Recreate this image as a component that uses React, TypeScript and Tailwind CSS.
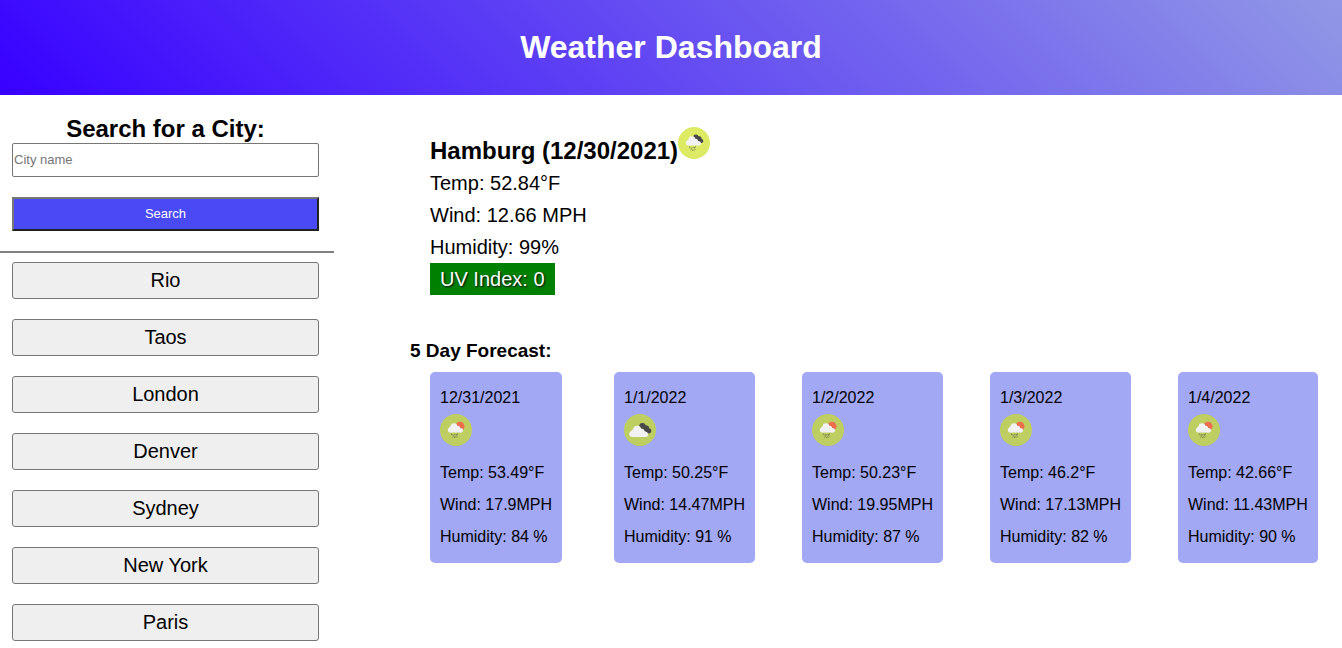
import React from "react";

type Sky = "rain" | "sun-rain" | "clouds";

interface Day {
  date: string;
  sky: Sky;
  temp: string;
  wind: string;
  humidity: string;
}

const cities = ["Rio", "Taos", "London", "Denver", "Sydney", "New York", "Paris"];

const days: Day[] = [
  { date: "12/31/2021", sky: "sun-rain", temp: "53.49°F", wind: "17.9MPH", humidity: "84 %" },
  { date: "1/1/2022", sky: "clouds", temp: "50.25°F", wind: "14.47MPH", humidity: "91 %" },
  { date: "1/2/2022", sky: "sun-rain", temp: "50.23°F", wind: "19.95MPH", humidity: "87 %" },
  { date: "1/3/2022", sky: "sun-rain", temp: "46.2°F", wind: "17.13MPH", humidity: "82 %" },
  { date: "1/4/2022", sky: "sun-rain", temp: "42.66°F", wind: "11.43MPH", humidity: "90 %" },
];

function RainCloud() {
  return (
    <>
      <g fill="#f2f2f2">
        <circle cx="10.3" cy="16" r="2.500" />
        <circle cx="11" cy="14" r="1.800" />
        <circle cx="14" cy="12.600" r="3.300" />
        <circle cx="17.600" cy="14.200" r="2.500" />
        <circle cx="21" cy="16.400" r="2.100" />
        <rect x="10.3" y="14" width="10.700" height="4.500" />
      </g>
      <path
        d="M11.700 20l.3.900M14.100 20.600l-.2.800M17.300 19.900l-.5 1.200M13 22.800l-.1.200M15 22.800l-.2.800M15.900 20.400l.1.200M17 22.800l-.1.200"
        stroke="#4b4b4b"
        strokeWidth="1"
        strokeLinecap="round"
        opacity="0.75"
      />
    </>
  );
}

function SkyIcon({ sky, className }: { sky: Sky; className: string }) {
  return (
    <svg viewBox="0 0 32 32" className={className} aria-hidden="true">
      <circle cx="16" cy="16" r="16" fill={sky === "rain" ? "#dcea64" : "#bfce60"} />
      {sky === "clouds" && (
        <>
          <g fill="#484848">
            <circle cx="18.200" cy="11.800" r="2.900" />
            <circle cx="22.400" cy="14.200" r="2.800" />
            <circle cx="25" cy="16.900" r="2.400" />
            <path d="M18 14l1.500-5 5.500 5 1 5.200h-3z" />
          </g>
          <g fill="#f2f2f2">
            <circle cx="8.200" cy="20" r="3" />
            <circle cx="9.500" cy="17.500" r="2.200" />
            <circle cx="13.200" cy="15.700" r="4" />
            <circle cx="17.600" cy="17.600" r="2.800" />
            <circle cx="21.400" cy="20.400" r="2.600" />
            <rect x="8.200" y="17.500" width="13.200" height="5.500" />
          </g>
        </>
      )}
      {sky === "sun-rain" && <circle cx="20" cy="12.200" r="4.500" fill="#ec6e4c" />}
      {sky === "rain" && (
        <g fill="#484848">
          <circle cx="17.700" cy="10" r="2.400" />
          <circle cx="21.200" cy="11.600" r="2.400" />
          <circle cx="23.300" cy="14" r="2" />
          <path d="M17 12l1.500-4.400 4.500 3.400 1 5-3-.5z" />
        </g>
      )}
      {sky !== "clouds" && <RainCloud />}
    </svg>
  );
}

function ForecastCard({ day }: { day: Day }) {
  return (
    <article className="justify-self-start rounded-[5px] bg-[#a2a8f4] p-2.5 text-base leading-8 whitespace-nowrap">
      <p>{day.date}</p>
      <SkyIcon sky={day.sky} className="mb-[11px] block size-8" />
      <p>Temp: {day.temp}</p>
      <p>Wind: {day.wind}</p>
      <p>Humidity: {day.humidity}</p>
    </article>
  );
}

export default function App() {
  return (
    <div className="bg-white font-['Liberation_Sans',Arial,sans-serif] text-black">
      <header className="bg-[linear-gradient(45deg,#3700ff,#9198e5)] pt-[29px] pb-[30px] text-center text-white">
        <h1 className="text-[32px] leading-9 font-bold">Weather Dashboard</h1>
      </header>

      <div className="flex">
        <aside className="w-[334px] shrink-0 pt-5">
          <form className="flex flex-col pr-[15px] pl-3" onSubmit={(e) => e.preventDefault()}>
            <label htmlFor="city" className="text-center text-2xl leading-7 font-bold">
              Search for a City:
            </label>
            <input
              id="city"
              type="text"
              placeholder="City name"
              className="h-[34px] rounded-xs border border-[#767676] px-px pb-0.5 text-[13px] placeholder:text-[#757575]"
            />
            <button
              type="submit"
              className="mt-5 h-[34px] border-2 border-t-[#767676] border-r-[#212121] border-b-[#212121] border-l-[#767676] bg-[#4a4af4] text-[13px] text-white"
            >
              Search
            </button>
          </form>
          <hr className="mt-5 border-t-2 border-[#808080]" />
          <div className="mt-[9px] flex flex-col gap-5 pr-[15px] pb-2 pl-3">
            {cities.map((city) => (
              <button
                key={city}
                type="button"
                className="h-[37px] rounded-[3px] border border-[#767676] bg-[#efefef] pb-0.5 text-xl leading-8"
              >
                {city}
              </button>
            ))}
          </div>
        </aside>

        <main className="min-w-0 flex-1 pt-8 pr-6 pl-24">
          <section className="text-xl leading-8">
            <h2 className="text-2xl leading-8 font-bold">
              Hamburg (12/30/2021)
              <SkyIcon sky="rain" className="inline-block size-8 align-baseline" />
            </h2>
            <p>Temp: 52.84°F</p>
            <p>Wind: 12.66 MPH</p>
            <p>Humidity: 99%</p>
            <p className="w-fit bg-[#008000] px-2.5 text-white [text-shadow:1px_1px_2px_black]">UV Index: 0</p>
          </section>

          <section>
            <h3 className="-ml-5 pt-10 text-[19px] leading-8 font-bold">5 Day Forecast:</h3>
            <div className="mt-[5px] grid grid-cols-[184fr_188fr_188fr_188fr_140fr]">
              {days.map((day) => (
                <ForecastCard key={day.date} day={day} />
              ))}
            </div>
          </section>
        </main>
      </div>
    </div>
  );
}
